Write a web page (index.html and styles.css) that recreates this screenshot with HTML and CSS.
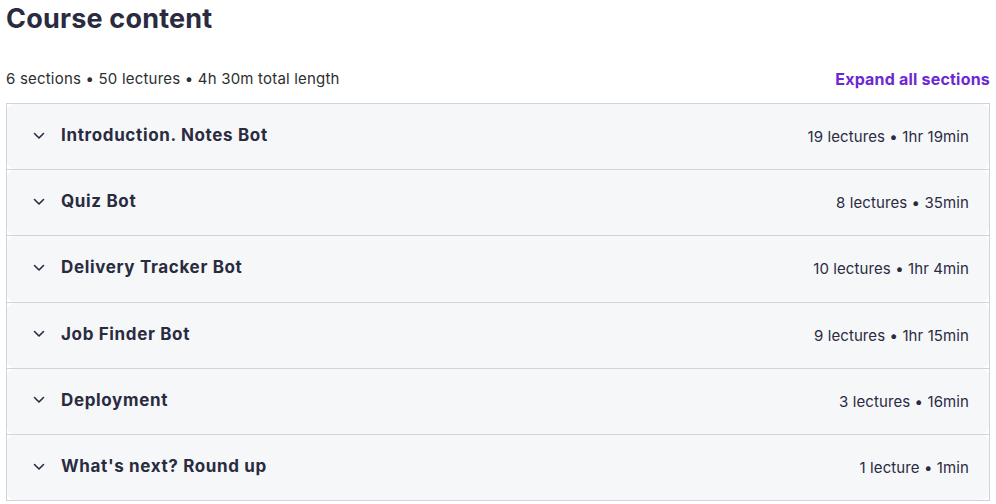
FILE: index.html
```html
<!DOCTYPE html>
<html lang="en">
<head>
<meta charset="utf-8">
<title>Course content</title>
<link rel="stylesheet" href="styles.css">
</head>
<body>
<div class="course">
  <h2 class="course-title">Course content</h2>
  <div class="course-bar">
    <span class="course-stats">6 sections • 50 lectures • 4h 30m total length</span>
    <button class="expand-all" type="button">Expand all sections</button>
  </div>
  <div class="sections">
    <div class="section">
      <div class="section-head">
        <svg class="chev" viewBox="0 0 12 8" aria-hidden="true"><path d="M1.5 1.5 6 6l4.5-4.5"/></svg>
        <span class="section-name">Introduction. Notes Bot</span>
        <span class="section-meta">19 lectures • 1hr 19min</span>
      </div>
    </div>
    <div class="section">
      <div class="section-head">
        <svg class="chev" viewBox="0 0 12 8" aria-hidden="true"><path d="M1.5 1.5 6 6l4.5-4.5"/></svg>
        <span class="section-name">Quiz Bot</span>
        <span class="section-meta">8 lectures • 35min</span>
      </div>
    </div>
    <div class="section">
      <div class="section-head">
        <svg class="chev" viewBox="0 0 12 8" aria-hidden="true"><path d="M1.5 1.5 6 6l4.5-4.5"/></svg>
        <span class="section-name">Delivery Tracker Bot</span>
        <span class="section-meta">10 lectures • 1hr 4min</span>
      </div>
    </div>
    <div class="section">
      <div class="section-head">
        <svg class="chev" viewBox="0 0 12 8" aria-hidden="true"><path d="M1.5 1.5 6 6l4.5-4.5"/></svg>
        <span class="section-name">Job Finder Bot</span>
        <span class="section-meta">9 lectures • 1hr 15min</span>
      </div>
    </div>
    <div class="section">
      <div class="section-head">
        <svg class="chev" viewBox="0 0 12 8" aria-hidden="true"><path d="M1.5 1.5 6 6l4.5-4.5"/></svg>
        <span class="section-name">Deployment</span>
        <span class="section-meta">3 lectures • 16min</span>
      </div>
    </div>
    <div class="section">
      <div class="section-head">
        <svg class="chev" viewBox="0 0 12 8" aria-hidden="true"><path d="M1.5 1.5 6 6l4.5-4.5"/></svg>
        <span class="section-name">What's next? Round up</span>
        <span class="section-meta">1 lecture • 1min</span>
      </div>
    </div>
  </div>
</div>
</body>
</html>
```
FILE: styles.css
```css
* { box-sizing: border-box; }

html, body {
  margin: 0;
  background: #ffffff;
}

body {
  font-family: Inter, "Noto Sans", sans-serif;
  color: #2d2f31;
}

.course {
  padding: 0 6px;
}

.course-title {
  margin: 0;
  padding-top: 2px;
  font-size: 27px;
  line-height: 34px;
  font-weight: 700;
  color: #2a2b3f;
  letter-spacing: 0.2px;
}

.course-bar {
  display: flex;
  align-items: center;
  justify-content: space-between;
  margin-top: 27px;
  height: 30px;
  padding-bottom: 10px;
  box-sizing: content-box;
}

.course-stats {
  font-size: 15px;
  color: #2d2f31;
  letter-spacing: 0.2px;
}

.expand-all {
  border: 0;
  background: none;
  padding: 0;
  font: inherit;
  font-size: 16px;
  font-weight: 700;
  color: #6d28d2;
  letter-spacing: 0.2px;
  margin-top: 2px;
}

.sections {
  border: 1px solid #d1d2e0;
  border-bottom-width: 0;
}

.section {
  border-bottom: 1px solid #d1d2e0;
}

.section-head {
  display: flex;
  align-items: center;
  height: 65.2px;
  padding: 0 20px 0 26px;
  background: #f6f7f9;
  border-radius: 8px;
}

.chev {
  width: 12px;
  height: 8px;
  fill: none;
  stroke: #2a2b3f;
  stroke-width: 1.6;
  stroke-linecap: round;
  stroke-linejoin: round;
  margin-right: 16px;
  margin-top: -2px;
}

.section-name {
  flex: 1;
  font-size: 17px;
  font-weight: 700;
  color: #2a2b3f;
  letter-spacing: 0.65px;
  margin-top: -3px;
}

.section-meta {
  font-size: 15px;
  color: #2a2b3f;
  letter-spacing: 0.1px;
}
```
